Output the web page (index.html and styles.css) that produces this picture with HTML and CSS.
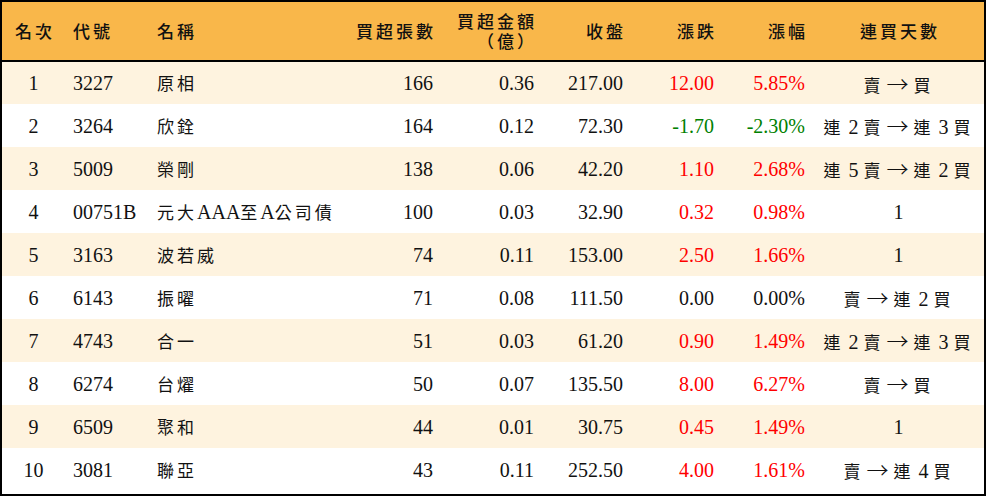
FILE: index.html
```html
<!DOCTYPE html>
<html lang="zh-Hant">
<head>
<meta charset="utf-8">
<link rel="stylesheet" href="styles.css">
</head>
<body>
<div class="frame">
<table class="rank">
  <colgroup>
    <col class="c1"><col class="c2"><col class="c3"><col class="c4"><col class="c5"><col class="c6"><col class="c7"><col class="c8"><col class="c9">
  </colgroup>
  <thead>
    <tr>
      <th class="ctr">名次</th>
      <th class="lft">代號</th>
      <th class="lft">名稱</th>
      <th class="rgt">買超張數</th>
      <th class="rgt two"><span class="hl">買超金額</span><span class="hl">（億）</span></th>
      <th class="rgt">收盤</th>
      <th class="rgt">漲跌</th>
      <th class="rgt">漲幅</th>
      <th class="ctr">連買天數</th>
    </tr>
  </thead>
  <tbody>
    <tr class="alt"><td class="ctr">1</td><td class="lft">3227</td><td class="lft"><span class="zh">原相</span></td><td class="rgt">166</td><td class="rgt">0.36</td><td class="rgt">217.00</td><td class="rgt up">12.00</td><td class="rgt up">5.85%</td><td class="ctr"><span class="zh">賣</span><span class="ar">→</span><span class="zh">買</span></td></tr>
    <tr><td class="ctr">2</td><td class="lft">3264</td><td class="lft"><span class="zh">欣銓</span></td><td class="rgt">164</td><td class="rgt">0.12</td><td class="rgt">72.30</td><td class="rgt down">-1.70</td><td class="rgt down">-2.30%</td><td class="ctr"><span class="zh">連</span> 2 <span class="zh">賣</span><span class="ar">→</span><span class="zh">連</span> 3 <span class="zh">買</span></td></tr>
    <tr class="alt"><td class="ctr">3</td><td class="lft">5009</td><td class="lft"><span class="zh">榮剛</span></td><td class="rgt">138</td><td class="rgt">0.06</td><td class="rgt">42.20</td><td class="rgt up">1.10</td><td class="rgt up">2.68%</td><td class="ctr"><span class="zh">連</span> 5 <span class="zh">賣</span><span class="ar">→</span><span class="zh">連</span> 2 <span class="zh">買</span></td></tr>
    <tr><td class="ctr">4</td><td class="lft">00751B</td><td class="lft"><span class="zh">元大</span>AAA<span class="zh">至</span>A<span class="zh">公司債</span></td><td class="rgt">100</td><td class="rgt">0.03</td><td class="rgt">32.90</td><td class="rgt up">0.32</td><td class="rgt up">0.98%</td><td class="ctr">1</td></tr>
    <tr class="alt"><td class="ctr">5</td><td class="lft">3163</td><td class="lft"><span class="zh">波若威</span></td><td class="rgt">74</td><td class="rgt">0.11</td><td class="rgt">153.00</td><td class="rgt up">2.50</td><td class="rgt up">1.66%</td><td class="ctr">1</td></tr>
    <tr><td class="ctr">6</td><td class="lft">6143</td><td class="lft"><span class="zh">振曜</span></td><td class="rgt">71</td><td class="rgt">0.08</td><td class="rgt">111.50</td><td class="rgt">0.00</td><td class="rgt">0.00%</td><td class="ctr"><span class="zh">賣</span><span class="ar">→</span><span class="zh">連</span> 2 <span class="zh">買</span></td></tr>
    <tr class="alt"><td class="ctr">7</td><td class="lft">4743</td><td class="lft"><span class="zh">合一</span></td><td class="rgt">51</td><td class="rgt">0.03</td><td class="rgt">61.20</td><td class="rgt up">0.90</td><td class="rgt up">1.49%</td><td class="ctr"><span class="zh">連</span> 2 <span class="zh">賣</span><span class="ar">→</span><span class="zh">連</span> 3 <span class="zh">買</span></td></tr>
    <tr><td class="ctr">8</td><td class="lft">6274</td><td class="lft"><span class="zh">台燿</span></td><td class="rgt">50</td><td class="rgt">0.07</td><td class="rgt">135.50</td><td class="rgt up">8.00</td><td class="rgt up">6.27%</td><td class="ctr"><span class="zh">賣</span><span class="ar">→</span><span class="zh">買</span></td></tr>
    <tr class="alt"><td class="ctr">9</td><td class="lft">6509</td><td class="lft"><span class="zh">聚和</span></td><td class="rgt">44</td><td class="rgt">0.01</td><td class="rgt">30.75</td><td class="rgt up">0.45</td><td class="rgt up">1.49%</td><td class="ctr">1</td></tr>
    <tr><td class="ctr">10</td><td class="lft">3081</td><td class="lft"><span class="zh">聯亞</span></td><td class="rgt">43</td><td class="rgt">0.11</td><td class="rgt">252.50</td><td class="rgt up">4.00</td><td class="rgt up">1.61%</td><td class="ctr"><span class="zh">賣</span><span class="ar">→</span><span class="zh">連</span> 4 <span class="zh">買</span></td></tr>
  </tbody>
</table>
</div>
</body>
</html>
```

FILE: styles.css
```css
html, body {
  margin: 0;
  padding: 0;
  background: #ffffff;
}

.frame {
  width: 986px;
  height: 496px;
  box-sizing: border-box;
  border: 2px solid #000000;
  overflow: hidden;
  background: #ffffff;
}

.rank {
  width: 982px;
  border-collapse: collapse;
  table-layout: fixed;
  font-family: "Liberation Serif", "Noto Sans CJK TC", serif;
  font-size: 20px;
  color: #111111;
}

.c1 { width: 63px; }
.c2 { width: 84px; }
.c3 { width: 191px; }
.c4 { width: 101px; }
.c5 { width: 101px; }
.c6 { width: 89px; }
.c7 { width: 91px; }
.c8 { width: 91px; }
.c9 { width: 171px; }

.rank thead tr {
  background: #f9b74a;
  height: 59px;
}

.rank th {
  font-family: "Noto Sans CJK TC", sans-serif;
  font-weight: 500;
  font-size: 17px;
  letter-spacing: 3px;
  line-height: 20px;
  padding: 0 8px;
  border-bottom: 2px solid #000000;
  vertical-align: middle;
  white-space: nowrap;
}

.rank th .hl {
  display: block;
  height: 20px;
  line-height: 20px;
}

.rank th.rgt { padding-right: 5px; }
.rank th.ctr { padding-left: 11px; padding-right: 8px; }

.rank tbody tr {
  height: 43px;
}

.rank tbody tr.alt {
  background: #fef3df;
}

.rank td {
  padding: 0 8px;
  vertical-align: middle;
  white-space: nowrap;
  line-height: 24px;
}

.zh {
  font-family: "Noto Sans CJK TC", sans-serif;
  font-size: 17px;
  letter-spacing: 3px;
}

.ar {
  font-family: "Noto Sans CJK TC", sans-serif;
  font-weight: 300;
  font-size: 22px;
  margin: 0 5px 0 3px;
}

.ctr { text-align: center; }
.lft { text-align: left; }
.rgt { text-align: right; }

.up { color: #ff0000; }
.down { color: #008000; }
```
